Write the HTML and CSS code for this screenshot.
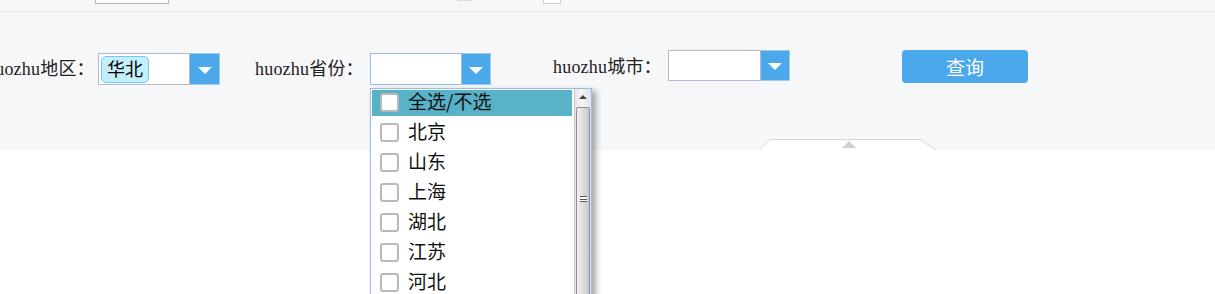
FILE: index.html
```html
<!DOCTYPE html>
<html lang="zh-CN">
<head>
  <meta charset="UTF-8" />
  <title>货主查询</title>
  <link rel="stylesheet" href="styles.css">
</head>
<body>
  <div class="topbar">
    <div class="top-input"></div>
    <div class="top-mark mark-a"></div>
    <div class="top-mark mark-b"></div>
  </div>

  <div class="panel">
    <div class="filter-row">
      <label class="field-label">huozhu地区：</label>
      <div class="combo">
        <div class="combo-input">
          <span class="tag">华北</span>
        </div>
        <div class="combo-btn"><span class="caret"></span></div>
      </div>

      <label class="field-label label-prov">huozhu省份：</label>
      <div class="combo combo-open">
        <div class="combo-input"></div>
        <div class="combo-btn"><span class="caret"></span></div>
      </div>

      <label class="field-label label-city">huozhu城市：</label>
      <div class="combo combo-city">
        <div class="combo-input"></div>
        <div class="combo-btn"><span class="caret"></span></div>
      </div>

      <button class="btn-query">查询</button>
    </div>

    <div class="collapse-tab">
      <svg width="180" height="12" viewBox="0 0 180 12">
        <polygon points="0.5,12 12,0.5 162,0.5 179.5,12" fill="#fff" stroke="#d6d7da" />
        <polygon points="84,9 91,2 98,9" fill="#cfd0d3" />
      </svg>
    </div>
  </div>

  <!-- province dropdown, lies over the page -->
  <div class="dropdown">
    <ul class="options">
      <li class="option selected"><span class="check"></span>全选/不选</li>
      <li class="option"><span class="check"></span>北京</li>
      <li class="option"><span class="check"></span>山东</li>
      <li class="option"><span class="check"></span>上海</li>
      <li class="option"><span class="check"></span>湖北</li>
      <li class="option"><span class="check"></span>江苏</li>
      <li class="option"><span class="check"></span>河北</li>
      <li class="option"><span class="check"></span>天津</li>
    </ul>
    <div class="scrollbar">
      <div class="scroll-up"><span class="up-arrow"></span></div>
      <div class="scroll-thumb">
        <span class="grip"></span>
      </div>
    </div>
  </div>
</body>
</html>
```

FILE: styles.css
```css
:root {
  --blue: #4aa8eb;
  --border: #b4b8cf;
  --focus: #98bde6;
  --panel: #f6f7f9;
}

body {
  margin: 0;
  width: 1215px;
  height: 294px;
  overflow: hidden;
  background: #ffffff;
  font-family: "Liberation Serif", "Noto Sans CJK SC", serif;
  position: relative;
}

.topbar {
  height: 11px;
  background: #f5f6f8;
  border-bottom: 1px solid #e7e8eb;
  display: flex;
  overflow: hidden;
}

.top-input {
  width: 74px;
  height: 24px;
  margin: -20px 0 0 95px;
  background: #fff;
  border: 1px solid var(--border);
  box-sizing: border-box;
}

.top-mark {
  height: 2px;
  margin-top: -1px;
  background: #dcdcdc;
}

.mark-a {
  width: 16px;
  margin-left: 288px;
}

.mark-b {
  width: 16px;
  height: 4px;
  margin-left: 70px;
  background: #fff;
  border: 1px solid #cfcfcf;
  border-top: 0;
}

.panel {
  background: var(--panel);
  height: 138px;
}

.filter-row {
  display: flex;
  align-items: flex-start;
  padding-top: 41px;
  margin-left: -14px;
  height: 32px;
}

.field-label {
  width: 102px;
  font-size: 18px;
  letter-spacing: 0.2px;
  color: #222;
  line-height: 32px;
  margin-right: 10px;
  white-space: nowrap;
}

.label-prov {
  margin-left: 35px;
  margin-right: 13px;
}

.label-city {
  margin-left: 62px;
  margin-right: 13px;
  margin-top: -2px;
}

.combo {
  display: flex;
  height: 32px;
}

.combo-input {
  width: 92px;
  height: 32px;
  box-sizing: border-box;
  background: #fff;
  border: 1px solid var(--border);
  padding: 2px;
  display: flex;
  align-items: center;
}

.combo-open .combo-input {
  border-color: var(--focus);
}

.combo-city {
  margin-top: -3px;
  height: 31px;
}

.combo-city .combo-input {
  width: 93px;
  height: 31px;
}

.combo-btn {
  width: 30px;
  background: var(--blue);
  box-sizing: border-box;
  border: 1px solid #9fcbef;
  border-left: 0;
  display: flex;
  align-items: center;
  justify-content: center;
}

.combo-open .combo-btn,
.combo-city .combo-btn {
  width: 29px;
}

.caret {
  width: 0;
  height: 0;
  border-left: 7px solid transparent;
  border-right: 7px solid transparent;
  border-top: 7px solid #fff;
  margin-top: 2px;
}

.tag {
  height: 25px;
  line-height: 23px;
  padding: 0 5px;
  background: #c2effb;
  border: 1px solid #79c6ee;
  border-radius: 5px;
  font-family: "Noto Sans CJK SC", sans-serif;
  font-size: 18px;
  color: #000;
}

.btn-query {
  margin-left: 112px;
  margin-top: -3px;
  width: 126px;
  height: 33px;
  border: none;
  border-radius: 4px;
  background: var(--blue);
  color: #fff;
  font-family: "Noto Sans CJK SC", sans-serif;
  font-size: 19px;
  line-height: 31px;
  padding: 0;
}

.collapse-tab {
  margin: 54px 0 0 758px;
  width: 180px;
  height: 11px;
  overflow: hidden;
}

.collapse-tab svg {
  display: block;
}

/* dropdown */
.dropdown {
  position: absolute;
  left: 370px;
  top: 88px;
  width: 222px;
  height: 230px;
  box-sizing: border-box;
  background: #fff;
  border: 1px solid var(--focus);
  box-shadow: 4px 3px 6px rgba(0, 0, 0, 0.35);
  display: flex;
}

.options {
  list-style: none;
  margin: 0;
  padding: 1px 2px 0 1px;
  width: 202px;
}

.option {
  height: 26px;
  margin-bottom: 4px;
  display: flex;
  align-items: flex-start;
  font-family: "Noto Sans CJK SC", sans-serif;
  font-size: 19px;
  line-height: 22px;
  color: #111;
}

.option.selected {
  background: #58b2c8;
}

.check {
  width: 19px;
  height: 19px;
  box-sizing: border-box;
  margin: 3px 9px 0 8px;
  background: #fff;
  border: 2px solid #b9b9b9;
  border-radius: 3px;
  box-shadow: inset 0 0 1px #ddd;
}

.scrollbar {
  width: 16px;
  border-left: 1px solid #c9c9c9;
  background: linear-gradient(to right, #e6e6e6, #f4f4f4 40%, #e2e2e2);
  display: flex;
  flex-direction: column;
}

.scroll-up {
  height: 16px;
  display: flex;
  align-items: center;
  justify-content: center;
}

.up-arrow {
  width: 0;
  height: 0;
  border-left: 4px solid transparent;
  border-right: 4px solid transparent;
  border-bottom: 4px solid #444;
}

.scroll-thumb {
  flex: 1;
  margin: 2px 1px 0 1px;
  border: 1px solid #8f8f8f;
  border-radius: 2px;
  background: linear-gradient(to right, #f0f0f0, #e0e0e0 45%, #c8c8c8);
  display: flex;
  justify-content: center;
  padding-top: 88px;
}

.grip {
  width: 7px;
  height: 6px;
  border-top: 1px solid #555;
  border-bottom: 1px solid #555;
  box-sizing: border-box;
  background: linear-gradient(#fff 0 2px, #555 2px 3px, #fff 3px);
}
```
